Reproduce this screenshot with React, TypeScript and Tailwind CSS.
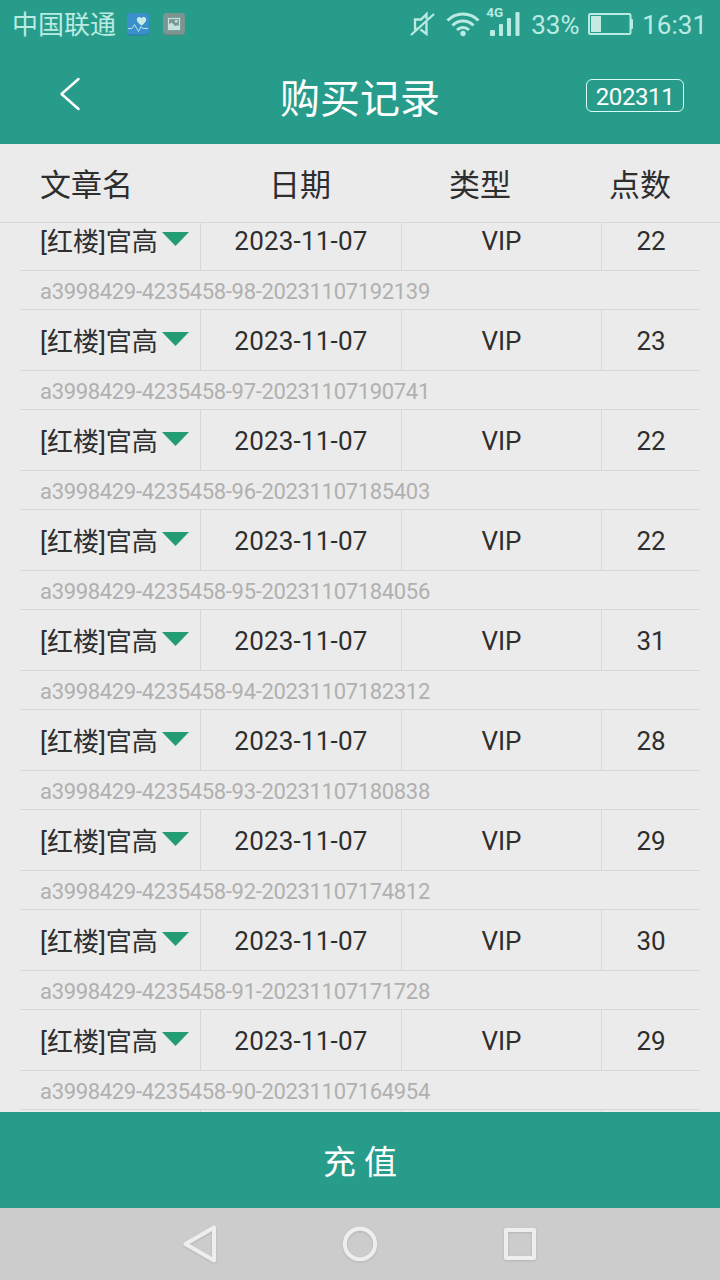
import type { ReactNode } from 'react'

interface PurchaseRecord {
  id: string
  title: string
  date: string
  type: string
  points: number
}

const records: PurchaseRecord[] = [
  { id: 'a3998429-4235458-98-20231107192139', title: '[红楼]官高', date: '2023-11-07', type: 'VIP', points: 22 },
  { id: 'a3998429-4235458-97-20231107190741', title: '[红楼]官高', date: '2023-11-07', type: 'VIP', points: 23 },
  { id: 'a3998429-4235458-96-20231107185403', title: '[红楼]官高', date: '2023-11-07', type: 'VIP', points: 22 },
  { id: 'a3998429-4235458-95-20231107184056', title: '[红楼]官高', date: '2023-11-07', type: 'VIP', points: 22 },
  { id: 'a3998429-4235458-94-20231107182312', title: '[红楼]官高', date: '2023-11-07', type: 'VIP', points: 31 },
  { id: 'a3998429-4235458-93-20231107180838', title: '[红楼]官高', date: '2023-11-07', type: 'VIP', points: 28 },
  { id: 'a3998429-4235458-92-20231107174812', title: '[红楼]官高', date: '2023-11-07', type: 'VIP', points: 29 },
  { id: 'a3998429-4235458-91-20231107171728', title: '[红楼]官高', date: '2023-11-07', type: 'VIP', points: 30 },
  { id: 'a3998429-4235458-90-20231107164954', title: '[红楼]官高', date: '2023-11-07', type: 'VIP', points: 29 },
]

function HealthIcon() {
  return (
    <svg width="24" height="24" viewBox="0 0 24 24" fill="none">
      <rect x="1" y="1.5" width="22" height="22" rx="3.5" fill="#2877a8" />
      <rect x="1" y="1" width="22" height="21.5" rx="3.5" fill="#3b8fca" />
      <path d="M15.500 13.500c-3-2.200-4.700-3.800-4.700-6 0-1.500 1-2.500 2.300-2.500 1 0 1.900.5 2.400 1.400.5-.9 1.400-1.400 2.400-1.400 1.300 0 2.300 1 2.300 2.500 0 2.200-1.700 3.800-4.700 6z" fill="#c9ece9" />
      <path d="M2 16.500h4l2.500-4 4 7 2.500-5 1.500 2H22" stroke="#b9e3ea" strokeWidth="1" strokeLinejoin="round" />
    </svg>
  )
}

function GalleryIcon() {
  return (
    <svg width="24" height="24" viewBox="0 0 24 24" fill="none">
      <rect x="1" y="1.5" width="22" height="22" rx="3.5" fill="#64807b" />
      <rect x="1" y="1" width="22" height="21.5" rx="3.5" fill="#7b9692" />
      <rect x="6.500" y="6.500" width="11" height="11" stroke="#c3e3de" strokeWidth="1.200" />
      <path d="M6.500 13l3-2.500 4 3.700 1.800-1.300 2.200 1.700v3h-11z" fill="#c3e3de" />
      <rect x="13" y="8" width="2.500" height="2.500" fill="#c3e3de" />
    </svg>
  )
}

function MuteIcon() {
  return (
    <svg width="26" height="28" viewBox="0 0 26 28" fill="none" stroke="#b9ebe2" strokeWidth="2.3">
      <path d="M16.500 9V4l-5.500 5.500H5v9.500h3M10.500 19.500l6 4.500V12" />
      <path d="M1 25L24 4" />
    </svg>
  )
}

function WifiIcon() {
  return (
    <svg width="34" height="28" viewBox="0 0 34 28" fill="none" stroke="#b9ebe2" strokeWidth="3">
      <path d="M1.500 10.500C10 1.800 24 1.800 32.500 10.500" />
      <path d="M6.500 15.500c5.800-6 15.200-6 21 0" />
      <path d="M11 20c3.500-3.500 8.500-3.500 12 0" />
      <circle cx="17" cy="23.500" r="2.700" fill="#b9ebe2" stroke="none" />
    </svg>
  )
}

function SignalIcon() {
  return (
    <div className="relative h-[30px] w-[33px]">
      <span className="absolute -left-px top-0 text-[13.5px] font-bold leading-[13px]">4G</span>
      <svg className="block" width="33" height="30" viewBox="0 0 33 30" fill="#b9ebe2">
        <rect x="3" y="24" width="5" height="6" rx="1" />
        <rect x="12" y="18" width="4" height="12" rx="1" />
        <rect x="20" y="12" width="4" height="18" rx="1" />
        <rect x="28.500" y="6" width="4" height="24" rx="1" />
      </svg>
    </div>
  )
}

function BatteryIcon() {
  return (
    <svg width="45" height="22" viewBox="0 0 45 22" fill="none">
      <rect x="1" y="1" width="41.500" height="20" rx="1.500" stroke="#b9ebe2" strokeWidth="2" />
      <rect x="3" y="3" width="10" height="16" fill="#c4e9e3" />
      <rect x="42.500" y="6" width="2.500" height="10" rx="1" fill="#b9ebe2" />
    </svg>
  )
}

function StatusBar() {
  return (
    <div className="flex h-12 items-center justify-between pl-3 pr-[13px] text-[26px] leading-none text-[#b9ebe2]">
      <div className="flex items-center">
        <span className="pt-px">中国联通</span>
        <div className="ml-[10px] flex gap-3">
          <HealthIcon />
          <GalleryIcon />
        </div>
      </div>
      <div className="flex items-center">
        <MuteIcon />
        <div className="ml-[10px]">
          <WifiIcon />
        </div>
        <div className="-mt-[6px] ml-[7px]">
          <SignalIcon />
        </div>
        <span className="ml-[11px] mt-px w-[57px]">33%</span>
        <BatteryIcon />
        <span className="ml-[9px] mt-px">16:31</span>
      </div>
    </div>
  )
}

function TitleBar() {
  return (
    <div className="grid h-24 grid-cols-[1fr_auto_1fr] items-center text-white">
      <button className="mb-1 ml-[59px] w-6">
        <svg width="22" height="34" viewBox="0 0 22 34" fill="none" stroke="white" strokeWidth="2.5" strokeLinecap="round" strokeLinejoin="round">
          <path d="M19.500 2L2.500 17L19.500 32" />
        </svg>
      </button>
      <h1 className="mt-[7px] text-[40px] leading-none">购买记录</h1>
      <button className="mb-px mr-9 h-[33px] w-[98px] justify-self-end rounded-[6px] border border-[#d9fbf5] pt-[2px] text-2xl leading-none tracking-[-0.4px]">
        202311
      </button>
    </div>
  )
}

function Cell({ children }: { children: ReactNode }) {
  return <div className="flex items-center justify-center border-r border-[#d8d8d8] pt-[2px] last:border-r-0">{children}</div>
}

function RecordItem({ record }: { record: PurchaseRecord }) {
  return (
    <li>
      <div className="grid h-[61px] grid-cols-[181px_201px_200px_98px] border-b border-[#d8d8d8] text-[26px] leading-none text-[#2e2e2e]">
        <div className="flex items-center border-r border-[#d8d8d8] pl-5">
          <span className="w-[122px] whitespace-nowrap pt-[3px]">{record.title}</span>
          <svg className="-mt-[2px]" width="27" height="14" viewBox="0 0 27 14" fill="#239c72">
            <path d="M0 0h27L13.500 14z" />
          </svg>
        </div>
        <Cell>
          <span className="tracking-[0.2px]">{record.date}</span>
        </Cell>
        <Cell>{record.type}</Cell>
        <Cell>{record.points}</Cell>
      </div>
      <div className="flex h-[39px] items-center border-b border-[#d8d8d8] pl-5 pt-[3px] text-[22px] leading-none tracking-[-0.33px] text-[#b0b0b0]">
        {record.id}
      </div>
    </li>
  )
}

function NavigationBar() {
  return (
    <div className="flex h-[72px] items-center justify-center gap-[120px] bg-[#cccccc]">
      <svg className="drop-shadow-[0_1px_1px_rgba(0,0,0,0.12)]" width="40" height="40" viewBox="0 0 40 40" fill="none" stroke="#eeeeee" strokeWidth="4" strokeLinejoin="round">
        <path d="M34 3.500v33L5.500 20z" />
      </svg>
      <svg className="drop-shadow-[0_1px_1px_rgba(0,0,0,0.12)]" width="40" height="40" viewBox="0 0 40 40" fill="none" stroke="#eeeeee" strokeWidth="4">
        <circle cx="20" cy="20" r="15.200" />
      </svg>
      <svg className="drop-shadow-[0_1px_1px_rgba(0,0,0,0.12)]" width="40" height="40" viewBox="0 0 40 40" fill="none" stroke="#eeeeee" strokeWidth="4" strokeLinejoin="round">
        <rect x="6" y="6" width="28" height="28" />
      </svg>
    </div>
  )
}

function App() {
  return (
    <div className="flex h-[1280px] w-[720px] flex-col overflow-hidden bg-[#ebebeb] font-['Roboto','Noto_Sans_CJK_SC',sans-serif]">
      <header className="bg-[#289c8b]">
        <StatusBar />
        <TitleBar />
      </header>

      <div className="grid h-[79px] grid-cols-[200px_200px_160px_160px] items-center border-b border-[#d8d8d8] pt-[5px] text-center text-[31px] leading-none text-[#2e2e2e]">
        <span className="pl-10 text-left">文章名</span>
        <span>日期</span>
        <span>类型</span>
        <span>点数</span>
      </div>

      {/* list is scrolled down a few pixels */}
      <main className="min-h-0 flex-1 overflow-hidden px-5">
        <ul className="-mt-[13px]">
          {records.map((record) => (
            <RecordItem key={record.id} record={record} />
          ))}
        </ul>
        <div className="grid h-[61px] grid-cols-[181px_201px_200px_98px]">
          <div className="border-r border-[#d8d8d8]" />
          <div className="border-r border-[#d8d8d8]" />
          <div className="border-r border-[#d8d8d8]" />
        </div>
      </main>

      <button className="h-24 bg-[#289c8b] pt-1 text-[33px] leading-none text-white">充 值</button>
      <NavigationBar />
    </div>
  )
}

export default App
